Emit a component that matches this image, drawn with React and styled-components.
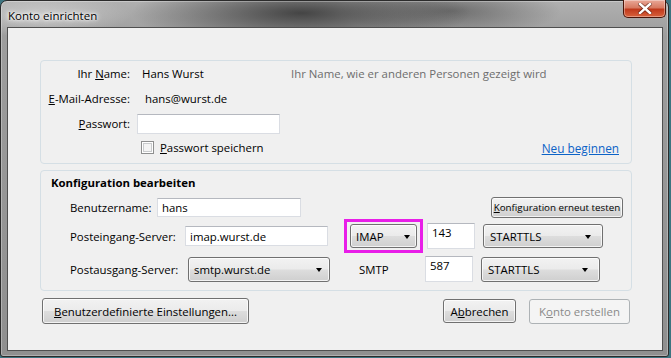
import React from "react";
import styled, { createGlobalStyle } from "styled-components";

const GlobalStyle = createGlobalStyle`
  html, body { margin: 0; padding: 0; }
  body {
    width: 671px;
    height: 358px;
    overflow: hidden;
    background: #3d7480;
    font-family: "Open Sans", "Noto Sans", sans-serif;
    font-size: 11.4px;
    color: #000;
  }
  * { box-sizing: border-box; }
`;

/* === WINDOW FRAME === */
const Window = styled.div`
  width: 669px;
  height: 357px;
  display: flex;
  flex-direction: column;
  padding: 0 5px 5px 6px;
  border: 1px solid #2b2b2b;
  border-radius: 7px 7px 3px 3px;
  background:
    radial-gradient(ellipse 170px 34px at 300px 12px, rgba(40, 40, 40, 0.78), transparent),
    radial-gradient(ellipse 110px 26px at 450px 10px, rgba(60, 60, 60, 0.55), transparent),
    radial-gradient(ellipse 90px 22px at 40px 14px, rgba(215, 215, 215, 0.7), transparent),
    linear-gradient(180deg, #b0b0b0 0%, #9d9d9d 10%, #8f8f8f 100%);
  box-shadow: inset 0 0 0 1px rgba(255, 255, 255, 0.3);
`;

const TitleBar = styled.div`
  height: 26px;
  flex: none;
  display: flex;
  align-items: flex-start;
  justify-content: space-between;
  padding-left: 1px;
`;

const Title = styled.div`
  margin-top: 7px;
  font-size: 11.5px;
  color: #000;
  text-shadow: 0 0 6px #fff, 0 0 4px #fff, 0 0 2px #fff;
`;

const CloseButton = styled.div`
  width: 43px;
  height: 18px;
  margin: -1px -3px 0 0;
  display: flex;
  align-items: center;
  justify-content: center;
  border: 1px solid #4a1408;
  border-top: none;
  border-radius: 0 0 5px 5px;
  background: linear-gradient(180deg, #e9a898 0%, #d77a62 45%, #c0391c 55%, #d8623c 100%);
  box-shadow: inset 0 0 0 1px rgba(255, 255, 255, 0.35);
`;

const Client = styled.div`
  flex: 1;
  display: flex;
  flex-direction: column;
  background: #f0f0f0;
  border: 1px solid #4f4f4f;
  padding: 32px 30px 0 32px;
`;

/* === GROUP BOXES === */
const Group = styled.div`
  border: 1px solid #d5dfe5;
  border-radius: 4px;
  margin-top: ${(p) => p.$mt || 0}px;
  height: ${(p) => p.$h}px;
`;

const IdentityGrid = styled.div`
  display: grid;
  grid-template-columns: 89px 143px 1fr;
  grid-auto-rows: 25px;
  column-gap: 7px;
  align-items: center;
  padding-right: 12px;
`;

const Label = styled.div`
  text-align: ${(p) => (p.$right ? "right" : "left")};
  white-space: nowrap;
  width: ${(p) => (p.$w ? `${p.$w}px` : "auto")};
  flex: none;
`;

const Value = styled.div`
  padding-left: ${(p) => p.$pl || 5}px;
  white-space: nowrap;
`;

const Hint = styled.div`
  color: #6d6d6d;
  padding-left: 4px;
  white-space: nowrap;
`;

const TextField = styled.input`
  width: ${(p) => p.$w}px;
  height: ${(p) => p.$h || 19}px;
  margin-left: ${(p) => p.$ml || 0}px;
  padding: 0 ${(p) => p.$pad || 4}px ${(p) => p.$pb || 0}px;
  border: 1px solid #dadde3;
  border-top-color: #b5b8bf;
  background: #fff;
  font: inherit;
  color: #000;
  outline: none;
  flex: none;
`;

const CheckRow = styled.label`
  display: flex;
  align-items: center;
  gap: 6px;
  padding-left: 4px;
  margin-top: -2px;
  white-space: nowrap;
`;

const CheckBox = styled.span`
  width: 13px;
  height: 13px;
  border: 1px solid #8e8f8f;
  background: #f4f4f4;
  box-shadow: inset 0 0 0 1px #fff, inset 0 0 0 2px #c9cbcd;
`;

const LinkText = styled.a`
  justify-self: end;
  margin-top: -2px;
  color: #0c63c7;
  font-size: 11.8px;
  text-decoration: underline;
  cursor: pointer;
`;

const GroupTitle = styled.div`
  font-weight: 700;
  padding: 4px 0 0 10px;
  line-height: 16px;
`;

const ConfigRow = styled.div`
  display: flex;
  align-items: center;
  height: ${(p) => p.$h}px;
  margin-top: ${(p) => p.$mt}px;
  padding: 0 8px 0 29px;
`;

/* === BUTTONS & COMBOS === */
const Button = styled.button`
  width: ${(p) => p.$w}px;
  height: ${(p) => p.$h || 24}px;
  margin-left: ${(p) => (p.$ml === "auto" ? "auto" : `${p.$ml || 0}px`)};
  padding: 0;
  font-family: inherit;
  font-size: ${(p) => p.$fs || 11.4}px;
  color: ${(p) => (p.disabled ? "#8a8a8a" : "#000")};
  border: 1px solid ${(p) => (p.disabled ? "#adb2b5" : "#707070")};
  border-radius: 3px;
  background: ${(p) =>
    p.disabled
      ? "#f4f4f4"
      : "linear-gradient(180deg, #f2f2f2 0%, #ebebeb 48%, #dddddd 52%, #cfcfcf 100%)"};
  box-shadow: inset 0 0 0 1px ${(p) => (p.disabled ? "#f4f4f4" : "rgba(255,255,255,0.75)")};
  flex: none;
`;

const Combo = styled.div`
  width: ${(p) => p.$w}px;
  height: ${(p) => p.$h || 24}px;
  margin-left: ${(p) => p.$ml || 0}px;
  display: flex;
  align-items: center;
  justify-content: space-between;
  padding: 0 ${(p) => p.$pr || 8}px 0 ${(p) => p.$pl || 6}px;
  border: 1px solid #707070;
  border-radius: 3px;
  background: linear-gradient(180deg, #f2f2f2 0%, #ebebeb 48%, #dddddd 52%, #cfcfcf 100%);
  box-shadow: inset 0 0 0 1px rgba(255, 255, 255, 0.75);
  flex: none;
  white-space: nowrap;
`;

const Arrow = styled.span`
  width: 0;
  height: 0;
  margin-top: 2px;
  border-left: 3.5px solid transparent;
  border-right: 3.5px solid transparent;
  border-top: 4px solid #000;
`;

const Highlight = styled.div`
  margin-left: 16px;
  padding: 2px 3px;
  border: 3px solid #e81ee8;
  flex: none;
`;

const ProtoLabel = styled.div`
  width: 95px;
  padding-left: 29px;
  flex: none;
`;

const ButtonRow = styled.div`
  display: flex;
  align-items: center;
  margin-top: 7px;
  padding-left: 2px;
  padding-right: 2px;
`;

function CloseGlyph() {
  return (
    <svg width="14" height="11" viewBox="0 0 14 11">
      <path
        d="M2 1 L12 10 M12 1 L2 10"
        stroke="#3a0c04"
        strokeWidth="4"
        strokeLinecap="square"
        opacity="0.55"
      />
      <path d="M2 1 L12 10 M12 1 L2 10" stroke="#fff" strokeWidth="2.4" strokeLinecap="square" />
    </svg>
  );
}

function Select({ text, w, h, pl, pr, ml }) {
  return (
    <Combo $w={w} $h={h} $pl={pl} $pr={pr} $ml={ml}>
      <span>{text}</span>
      <Arrow />
    </Combo>
  );
}

export default function App() {
  return (
    <>
      <GlobalStyle />
      <Window>
        <TitleBar>
          <Title>Konto einrichten</Title>
          <CloseButton>
            <CloseGlyph />
          </CloseButton>
        </TitleBar>
        <Client>
          <Group $h={104}>
            <IdentityGrid>
              <Label $right>
                Ihr <u>N</u>ame:
              </Label>
              <Value $pl={5}>Hans Wurst</Value>
              <Hint>Ihr Name, wie er anderen Personen gezeigt wird</Hint>

              <Label $right>
                <u>E</u>-Mail-Adresse:
              </Label>
              <Value $pl={8}>hans@wurst.de</Value>
              <div />

              <Label $right>
                <u>P</u>asswort:
              </Label>
              <TextField type="password" readOnly $w={143} $h={20} />
              <div />

              <div />
              <CheckRow>
                <CheckBox />
                <span>
                  <u>P</u>asswort speichern
                </span>
              </CheckRow>
              <LinkText>Neu beginnen</LinkText>
            </IdentityGrid>
          </Group>

          <Group $mt={6} $h={121}>
            <GroupTitle>Konfiguration bearbeiten</GroupTitle>
            <ConfigRow $h={22} $mt={5}>
              <Label $w={87}>Benutzername:</Label>
              <TextField readOnly value="hans" $w={144} $h={19} />
              <Button $ml="auto" $w={132} $h={21} $fs={9.8}>
                <u>K</u>onfiguration erneut testen
              </Button>
            </ConfigRow>
            <ConfigRow $h={32} $mt={2}>
              <Label $w={115}>Posteingang-Server:</Label>
              <TextField readOnly value="imap.wurst.de" $w={143} $h={20} />
              <Highlight>
                <Select text="IMAP" w={67} h={24} pl={5} pr={6} />
              </Highlight>
              <TextField readOnly value="143" $w={48} $h={26} $pb={8} $ml={4} />
              <Select text="STARTTLS" w={120} h={24} pl={6} pr={11} ml={8} />
            </ConfigRow>
            <ConfigRow $h={26} $mt={4}>
              <Label $w={118}>Postausgang-Server:</Label>
              <Select text="smtp.wurst.de" w={142} h={25} pl={5} pr={7} />
              <ProtoLabel>SMTP</ProtoLabel>
              <TextField readOnly value="587" $w={48} $h={26} $pb={8} />
              <Select text="STARTTLS" w={119} h={25} pl={6} pr={11} ml={8} />
            </ConfigRow>
          </Group>

          <ButtonRow>
            <Button $w={207} $h={26}>
              <u>B</u>enutzerdefinierte Einstellungen...
            </Button>
            <Button $ml="auto" $w={73} $h={24}>
              A<u>b</u>brechen
            </Button>
            <Button $ml={13} $w={101} $h={25} disabled>
              K<u>o</u>nto erstellen
            </Button>
          </ButtonRow>
        </Client>
      </Window>
    </>
  );
}
